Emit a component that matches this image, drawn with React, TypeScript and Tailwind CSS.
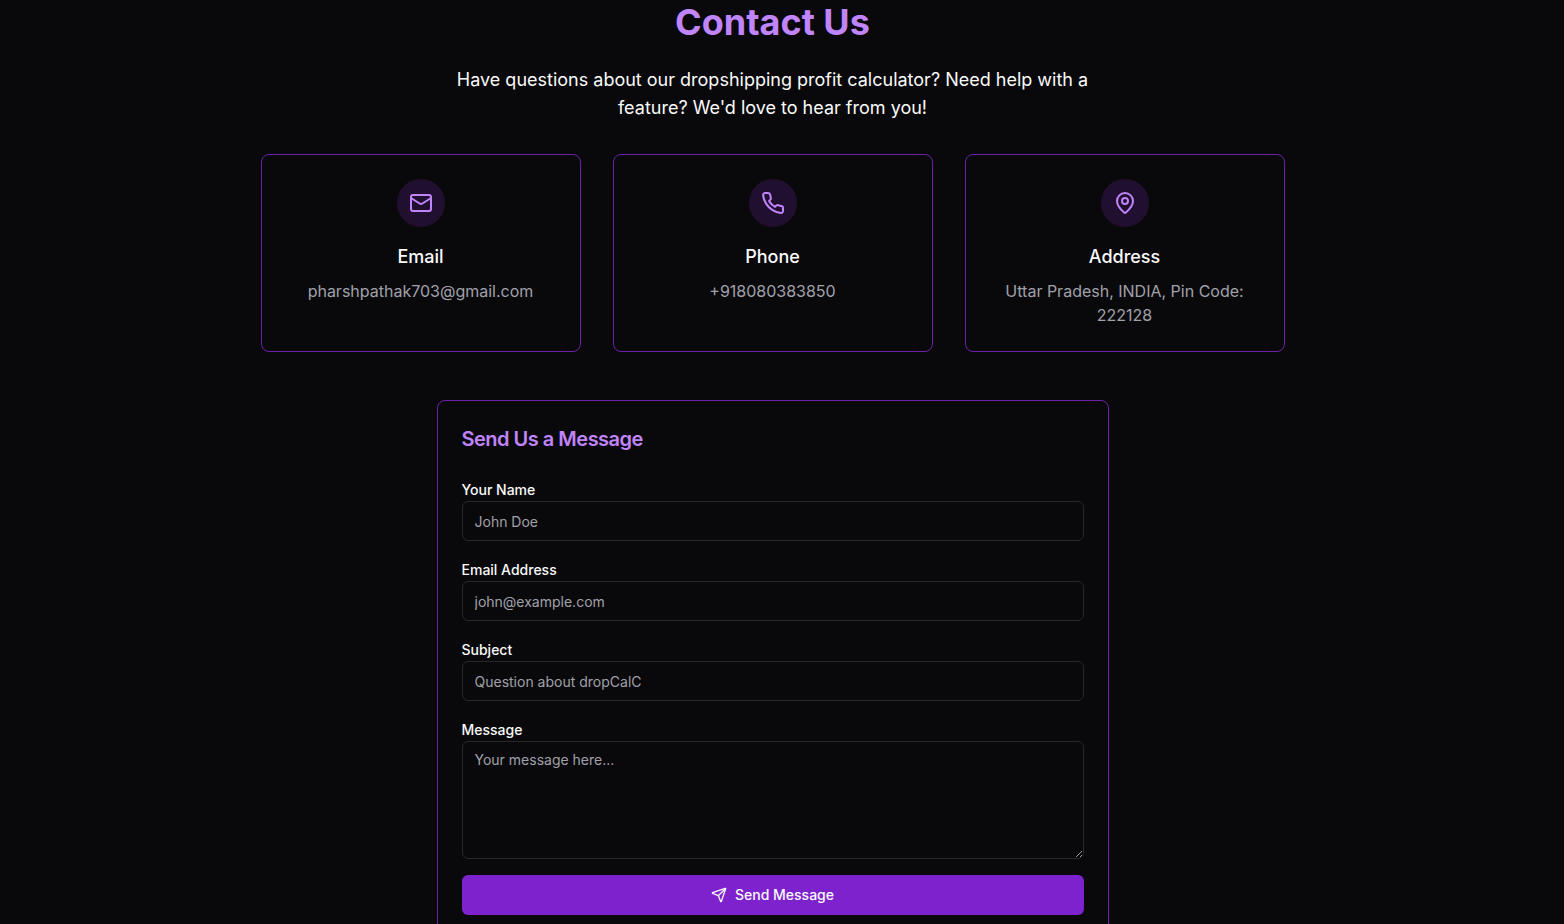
import React, { useState } from "react";
import { Mail, MapPin, Send } from "lucide-react";

interface IconProps {
  className?: string;
}

const PhoneIcon = ({ className }: IconProps) => (
  <svg
    viewBox="0 0 24 24"
    fill="none"
    stroke="currentColor"
    strokeWidth="2"
    strokeLinecap="round"
    strokeLinejoin="round"
    aria-hidden="true"
    className={className}
  >
    <path d="M22 16.92v3a2 2 0 0 1-2.18 2 19.79 19.79 0 0 1-8.63-3.07 19.5 19.5 0 0 1-6-6 19.79 19.79 0 0 1-3.07-8.67A2 2 0 0 1 4.11 2h3a2 2 0 0 1 2 1.72 12.84 12.84 0 0 0 .7 2.81 2 2 0 0 1-.45 2.11L8.09 9.91a16 16 0 0 0 6 6l1.27-1.27a2 2 0 0 1 2.11-.45 12.84 12.84 0 0 0 2.81.7A2 2 0 0 1 22 16.92z" />
  </svg>
);

interface ContactCardProps {
  icon: React.ComponentType<IconProps>;
  title: string;
  text: string;
}

const ContactCard = ({ icon: Icon, title, text }: ContactCardProps) => (
  <div className="flex flex-col items-center rounded-lg border border-[#6b21a8] p-6 text-center">
    <div className="mb-4 flex h-12 w-12 items-center justify-center rounded-full bg-[#210f30]">
      <Icon className="h-6 w-6 text-[#c084fc]" />
    </div>
    <h3 className="mb-2 text-lg font-medium">{title}</h3>
    <p className="text-base text-[#a1a1aa]">{text}</p>
  </div>
);

const fieldClass =
  "block w-full rounded-md border border-[#27272a] bg-[#09090b] px-3 py-2 text-sm text-[#fafafa] placeholder:text-[#a1a1aa] focus:outline-none focus:border-[#6b21a8]";

interface FieldProps {
  id: string;
  label: string;
  children: React.ReactNode;
}

const Field = ({ id, label, children }: FieldProps) => (
  <div>
    <label htmlFor={id} className="text-sm font-medium leading-none">
      {label}
    </label>
    {children}
  </div>
);

export default function App() {
  const [form, setForm] = useState({ name: "", email: "", subject: "", message: "" });

  const handleChange = (
    e: React.ChangeEvent<HTMLInputElement | HTMLTextAreaElement>
  ) => {
    setForm({ ...form, [e.target.name]: e.target.value });
  };

  return (
    <div className="min-h-screen bg-[#09090b] pt-0.5 pr-[19px] pb-12 font-['Inter',sans-serif] text-[#fafafa] antialiased">
      <main className="mx-auto max-w-5xl">
        <div className="mx-auto mb-8 max-w-2xl text-center">
          <h1 className="mb-6 text-4xl font-bold text-[#c084fc]">Contact Us</h1>
          <p className="text-lg">
            Have questions about our dropshipping profit calculator? Need help
            with a feature? We'd love to hear from you!
          </p>
        </div>

        <div className="mb-12 grid grid-cols-1 gap-8 md:grid-cols-3">
          <ContactCard icon={Mail} title="Email" text="pharshpathak703@gmail.com" />
          <ContactCard icon={PhoneIcon} title="Phone" text="+918080383850" />
          <ContactCard
            icon={MapPin}
            title="Address"
            text="Uttar Pradesh, INDIA, Pin Code: 222128"
          />
        </div>

        <div className="mx-auto max-w-2xl rounded-lg border border-[#6b21a8] p-6">
          <h2 className="mb-6 text-xl font-semibold tracking-tight text-[#c084fc]">
            Send Us a Message
          </h2>
          <form className="space-y-4" onSubmit={(e) => e.preventDefault()}>
            <Field id="name" label="Your Name">
              <input
                id="name"
                name="name"
                type="text"
                placeholder="John Doe"
                value={form.name}
                onChange={handleChange}
                className={`h-10 ${fieldClass}`}
              />
            </Field>
            <Field id="email" label="Email Address">
              <input
                id="email"
                name="email"
                type="email"
                placeholder="john@example.com"
                value={form.email}
                onChange={handleChange}
                className={`h-10 ${fieldClass}`}
              />
            </Field>
            <Field id="subject" label="Subject">
              <input
                id="subject"
                name="subject"
                type="text"
                placeholder="Question about dropCalC"
                value={form.subject}
                onChange={handleChange}
                className={`h-10 ${fieldClass}`}
              />
            </Field>
            <Field id="message" label="Message">
              <textarea
                id="message"
                name="message"
                rows={5}
                placeholder="Your message here..."
                value={form.message}
                onChange={handleChange}
                className={fieldClass}
              />
            </Field>
            <button
              type="submit"
              className="flex h-10 w-full items-center justify-center gap-2 rounded-md bg-[#7e22ce] px-4 text-sm font-medium transition-colors hover:bg-[#6b21a8]"
            >
              <Send className="h-4 w-4" />
              Send Message
            </button>
          </form>
        </div>
      </main>
    </div>
  );
}
